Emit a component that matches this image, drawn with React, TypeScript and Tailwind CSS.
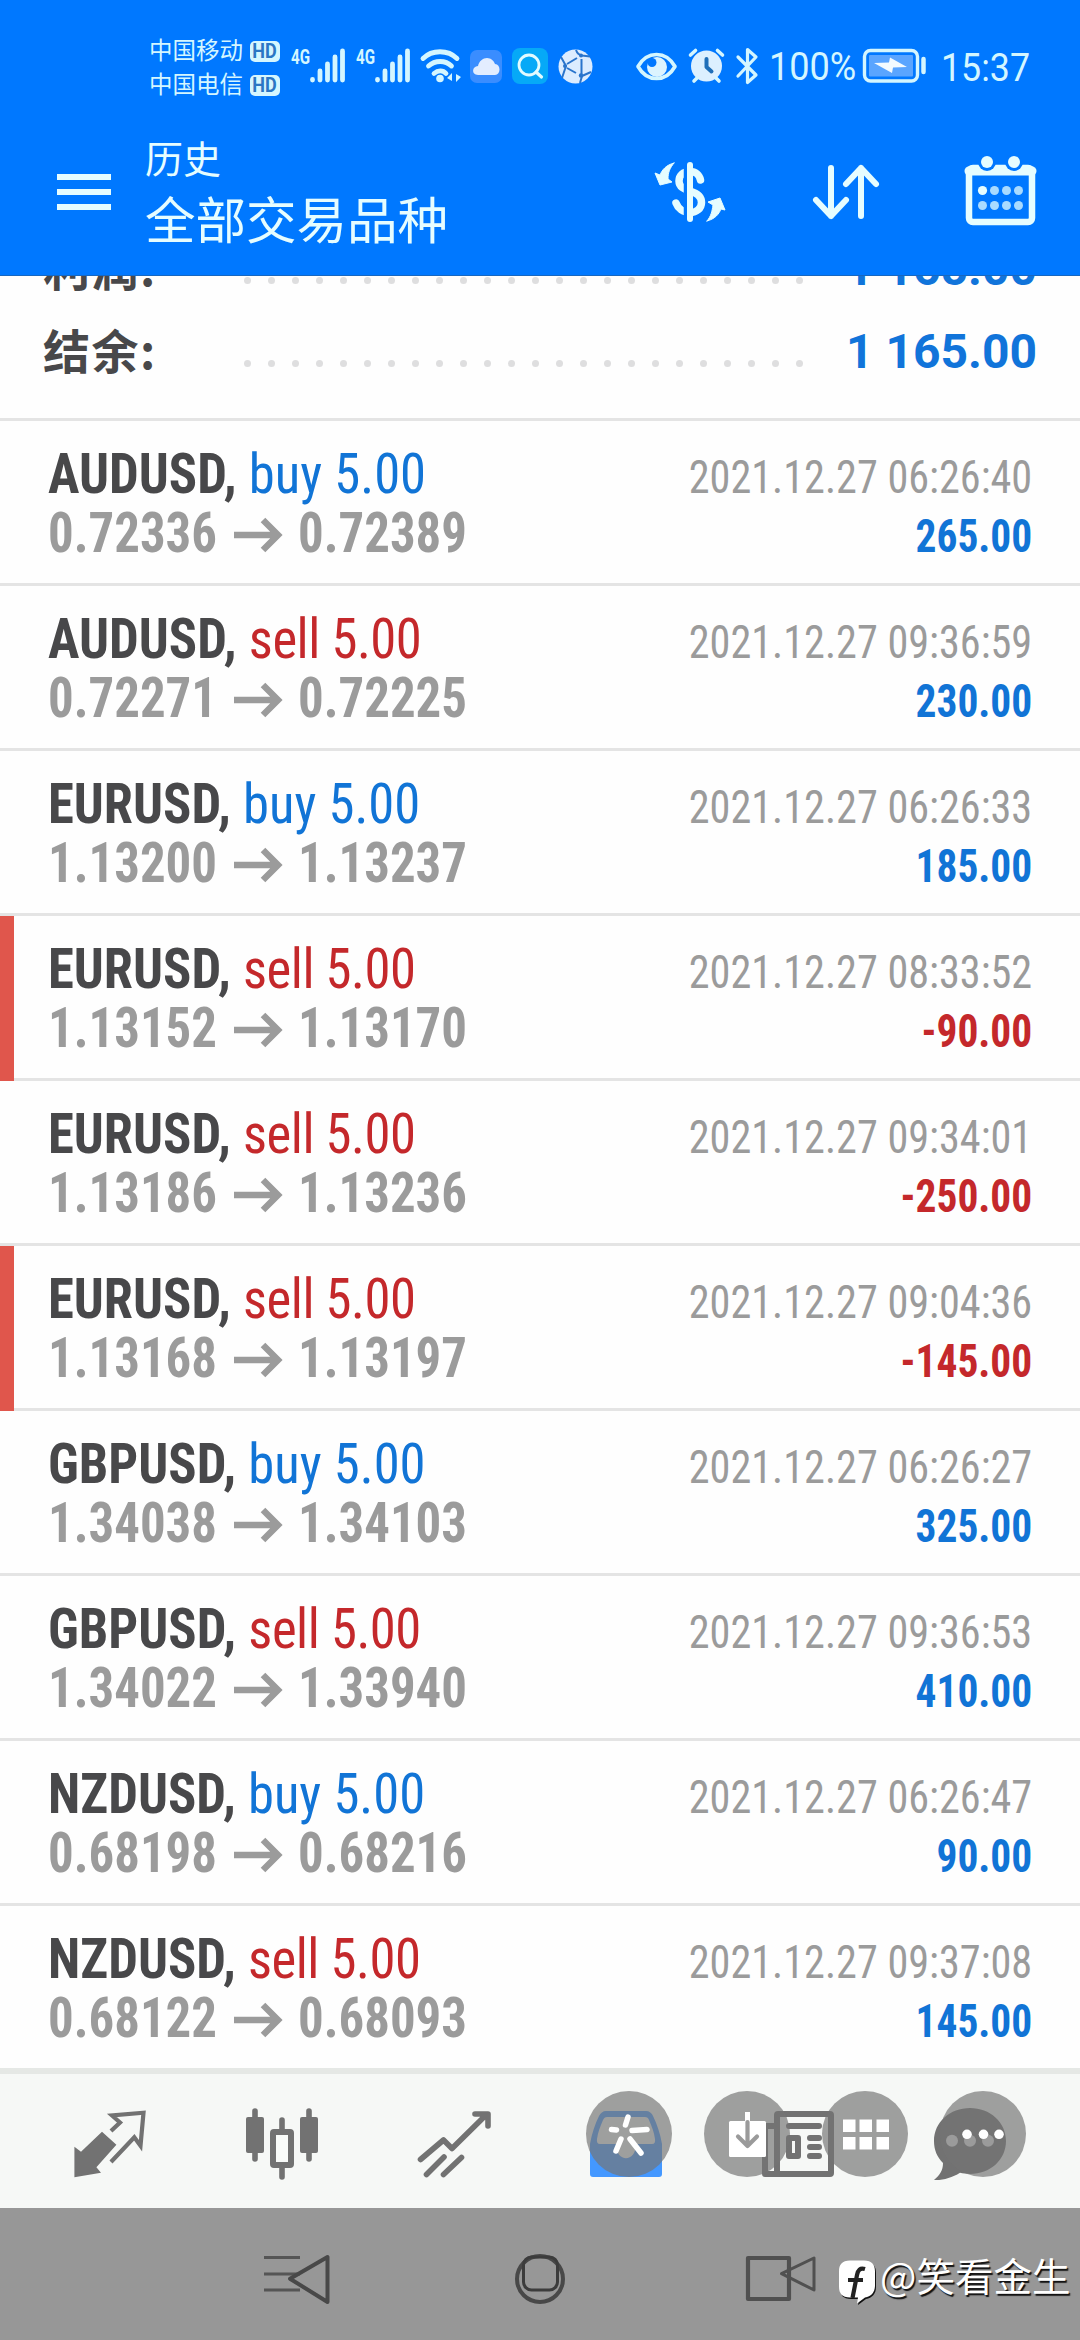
import type { ReactNode } from "react";
import clsx from "clsx";

type Deal = {
  symbol: string;
  side: "buy" | "sell";
  volume: string;
  open: string;
  close: string;
  time: string;
  profit: string;
  stopped?: boolean;
};

const deals: Deal[] = [
  { symbol: "AUDUSD", side: "buy", volume: "5.00", open: "0.72336", close: "0.72389", time: "2021.12.27 06:26:40", profit: "265.00" },
  { symbol: "AUDUSD", side: "sell", volume: "5.00", open: "0.72271", close: "0.72225", time: "2021.12.27 09:36:59", profit: "230.00" },
  { symbol: "EURUSD", side: "buy", volume: "5.00", open: "1.13200", close: "1.13237", time: "2021.12.27 06:26:33", profit: "185.00" },
  { symbol: "EURUSD", side: "sell", volume: "5.00", open: "1.13152", close: "1.13170", time: "2021.12.27 08:33:52", profit: "-90.00", stopped: true },
  { symbol: "EURUSD", side: "sell", volume: "5.00", open: "1.13186", close: "1.13236", time: "2021.12.27 09:34:01", profit: "-250.00" },
  { symbol: "EURUSD", side: "sell", volume: "5.00", open: "1.13168", close: "1.13197", time: "2021.12.27 09:04:36", profit: "-145.00", stopped: true },
  { symbol: "GBPUSD", side: "buy", volume: "5.00", open: "1.34038", close: "1.34103", time: "2021.12.27 06:26:27", profit: "325.00" },
  { symbol: "GBPUSD", side: "sell", volume: "5.00", open: "1.34022", close: "1.33940", time: "2021.12.27 09:36:53", profit: "410.00" },
  { symbol: "NZDUSD", side: "buy", volume: "5.00", open: "0.68198", close: "0.68216", time: "2021.12.27 06:26:47", profit: "90.00" },
  { symbol: "NZDUSD", side: "sell", volume: "5.00", open: "0.68122", close: "0.68093", time: "2021.12.27 09:37:08", profit: "145.00" },
];

function Icon({ box, className, children }: { box: string; className: string; children: ReactNode }) {
  return (
    <svg viewBox={box} className={clsx("block shrink-0 overflow-visible", className)} fill="none" strokeLinecap="round" strokeLinejoin="round">
      {children}
    </svg>
  );
}

function Carrier({ name }: { name: string }) {
  return (
    <div className="flex h-[34px] items-center gap-[7px]">
      <span className="w-[94px] whitespace-nowrap text-[23.5px] leading-[34px]">{name}</span>
      <span className="flex h-[21px] w-[30px] items-center justify-center rounded-[5px] bg-[#d4f6ff] text-[20px] font-bold leading-none text-[#2b76c4]">
        <span className="scale-x-90">HD</span>
      </span>
    </div>
  );
}

function Signal() {
  return (
    <Icon box="291 48 56 36" className="h-9 w-14">
      <text x="291" y="64" fontSize="20" fontWeight="700" textLength="19" lengthAdjust="spacingAndGlyphs" fill="#d4f6ff">4G</text>
      <path d="M312.500 80v-.5M320 80v-9M327.500 80V64M335 80V57M342.500 80V51" stroke="#d4f6ff" strokeWidth="4.800" />
    </Icon>
  );
}

function StatusBar() {
  return (
    <div className="flex h-[134px] text-[#d4f6ff]">
      <div className="ml-[149px] mt-[34px] w-[131px]">
        <Carrier name="中国移动" />
        <Carrier name="中国电信" />
      </div>
      <div className="ml-[11px] mt-12 flex h-9 items-center">
        <Signal />
        <div className="ml-[9px]"><Signal /></div>
        <Icon box="420 48 42 36" className="ml-2 h-9 w-[42px]">
          <g stroke="#d4f6ff" strokeWidth="4.800">
            <path d="M423 58.500c9-9 25-9 34 0" />
            <path d="M428.500 66c6.500-6 17-6 23 0" />
            <path d="M434 73.500c4-3.500 9-3.500 12 0" />
          </g>
          <circle cx="440" cy="78.500" r="3.800" fill="#d4f6ff" />
          <path d="M447 78l5-5v8M461 77l-5 5v-8" fill="#d4f6ff" />
        </Icon>
        <Icon box="470 50 32 33" className="ml-2 h-[33px] w-8">
          <rect x="470" y="50" width="32" height="33" rx="7" fill="#3a8dff" />
          <path d="M478 75c-7 0-6-9 0-9 1-5 5-8 9-8s7 3 8 6c6 0 6 11 0 11z" fill="#e3edff" />
        </Icon>
        <Icon box="512 48 36 36" className="ml-[10px] h-9 w-9">
          <rect x="512" y="48" width="36" height="36" rx="8" fill="#06a9f7" />
          <circle cx="529" cy="65" r="10" stroke="#e2fbff" strokeWidth="2.800" />
          <path d="M536 72l5.500 5" stroke="#e2fbff" strokeWidth="3.200" />
        </Icon>
        <Icon box="558 49 35 35" className="ml-[10px] h-[35px] w-[35px]">
          <circle cx="575.500" cy="66.500" r="17" fill="#dcecff" />
          <path d="M576 50c1 3 3 5 6 5.500l8 1M581.500 59v15M561 57l5 9-4 12M567 64l10-6M567 68l9 5M591 72l-9 4-2 7" stroke="#2a74cc" strokeWidth="2" strokeLinecap="butt" />
          <g fill="#2a74cc">
            <circle cx="581" cy="55.500" r="2" />
            <circle cx="565" cy="66" r="2" />
            <circle cx="581" cy="75.500" r="2.200" />
          </g>
        </Icon>
      </div>
      <div className="ml-[43px] mt-12 flex h-9 items-center">
        <Icon box="636 52 41 28" className="h-7 w-[41px]">
          <path d="M638 66.500c9-16 28-16 37 0-9 16-28 16-37 0z" stroke="#d4f6ff" strokeWidth="3.600" />
          <circle cx="657" cy="67" r="10" fill="#dcf4ff" />
          <circle cx="652" cy="62.500" r="4.500" fill="#0078ff" />
        </Icon>
        <Icon box="689 50 35 34" className="ml-3 h-[34px] w-[35px]">
          <circle cx="706.500" cy="67" r="15.500" fill="#dcf0ff" />
          <path d="M690.500 56l5-4.500M722.500 56l-5-4.500M694 82l3-3M719 82l-3-3" stroke="#d4f6ff" strokeWidth="3.600" />
          <path d="M706.500 60v8l5 4.500" stroke="#1f6fb8" strokeWidth="4" />
        </Icon>
        <Icon box="736 48 22 36" className="ml-3 h-9 w-[22px]">
          <path d="M738 57l18 18-8.500 7.500V49.500L756 57l-18 19" stroke="#d4f6ff" strokeWidth="3.200" />
        </Icon>
        <span className="ml-[11px] w-[86px] whitespace-nowrap pt-1">
          <span className="inline-block origin-left scale-x-[0.95] text-[38px] leading-9">100%</span>
        </span>
        <Icon box="863 50 63 34" className="ml-2 h-[34px] w-[63px]">
          <rect x="864.500" y="51.500" width="53" height="30.500" rx="6" stroke="#d4f6ff" strokeWidth="3.400" />
          <rect x="869" y="56" width="44" height="21.500" rx="1" fill="#5aa5ff" />
          <path d="M874 64l15-.5 1-5 17 9.500-14 .5-1 5.500z" fill="#f4fbff" />
          <path d="M923.500 60v13" stroke="#d4f6ff" strokeWidth="4.500" />
        </Icon>
        <span className="ml-[15px] inline-block origin-left scale-x-[0.94] pt-1 text-[38px] leading-9">15:37</span>
      </div>
    </div>
  );
}

function AppBar() {
  return (
    <div className="flex h-[142px] text-[#e6fdff]">
      <div className="ml-[57px] mt-10 flex w-[54px] flex-col gap-[9px]">
        <span className="h-1.5 bg-[#e6fdff]" />
        <span className="h-1.5 bg-[#e6fdff]" />
        <span className="h-1.5 bg-[#e6fdff]" />
      </div>
      <div className="ml-[34px] w-[508px]">
        <div className="h-[57px] text-[38px] leading-[52px]">历史</div>
        <div className="text-[50.500px] leading-[62px]">全部交易品种</div>
      </div>
      <Icon box="653 161 74 62" className="mt-[27px] h-[62px] w-[74px]">
        <path d="M700.500 180c-1-5-5-8.500-10.500-8.500-7 0-11 4-11 9.500 0 6 5 8 11 10 7 2 11.500 5 11.500 11.500 0 6-5 10-11.500 10-7 0-12-4-14-9.500" stroke="#e6fdff" strokeWidth="7.500" />
        <path d="M685.500 162v60" stroke="#0078ff" strokeWidth="3.500" strokeLinecap="butt" />
        <path d="M690 165v54" stroke="#e6fdff" strokeWidth="6" />
        <path d="M674 163c-8 2-12 7-14 12l-5-2 5 12 12-3-4-3c0-7 2-11 6-16z" fill="#e6fdff" stroke="#e6fdff" />
        <path d="M707 221c8-2 12-7 14-12l4 1-5-12-12 4 5 3c-1 7-2 11-6 16z" fill="#e6fdff" stroke="#e6fdff" />
      </Icon>
      <Icon box="813 165 66 54" className="ml-[86px] mt-[31px] h-[54px] w-[66px]">
        <path d="M831 168v48M816 200l15 16 15-16M861 216v-48M846 184l15-16 15 16" stroke="#e6fdff" strokeWidth="6" />
      </Icon>
      <Icon box="966 155 69 70" className="ml-[87px] mt-[21px] h-[70px] w-[69px]">
        <rect x="969" y="168" width="63" height="54" rx="4" stroke="#e6fdff" strokeWidth="6.500" />
        <path d="M969 171h63" stroke="#e6fdff" strokeWidth="9" />
        <circle cx="987" cy="162" r="9" fill="#0078ff" />
        <circle cx="1014" cy="162" r="9" fill="#0078ff" />
        <circle cx="987" cy="162" r="6" fill="#e6fdff" />
        <circle cx="1014" cy="162" r="6" fill="#e6fdff" />
        <circle cx="982.500" cy="190.500" r="4.600" fill="#e6fdff" />
        <g fill="#a9dbff">
          <circle cx="994.500" cy="190.500" r="4.500" />
          <circle cx="1006.500" cy="190.500" r="4.500" />
          <circle cx="1018.500" cy="190.500" r="4.500" />
          <circle cx="982.500" cy="205.500" r="4.500" />
          <circle cx="994.500" cy="205.500" r="4.500" />
          <circle cx="1006.500" cy="205.500" r="4.500" />
          <circle cx="1018.500" cy="205.500" r="4.500" />
        </g>
      </Icon>
    </div>
  );
}

function SummaryRow({ label, value }: { label: string; value: string }) {
  return (
    <div className="flex h-[83px] shrink-0 items-center pl-[43px] pr-[43px] font-bold">
      <span className="-mt-[7px] w-[201px] font-['Noto_Sans_CJK_SC',sans-serif] text-[47px] leading-[83px] tracking-[1.500px] text-[#48484a]">{label}</span>
      <span className="mt-[23px] flex w-[559px] justify-between">
        {Array.from({ length: 24 }, (_, i) => (
          <span key={i} className="h-[7px] w-[7px] rounded-full bg-[#dededf]" />
        ))}
      </span>
      <span className="ml-auto whitespace-nowrap text-[48px] leading-[83px] text-[#1174da]">{value}</span>
    </div>
  );
}

function DealRow({ deal }: { deal: Deal }) {
  return (
    <div className="flex h-[165px] border-b-[3px] border-[#e4e4e4] bg-[#fefefe] [font-stretch:75%]">
      <div className={clsx("-mb-[3px] w-3.5 shrink-0", deal.stopped && "bg-[#e0564c]")} />
      <div className="flex flex-1 justify-between pl-[34px] pr-[48px]">
        <div className="whitespace-nowrap pt-[24px] text-[55px] font-bold">
          <div className="h-[59px] origin-left scale-x-[0.957] leading-[59px] text-[#48484a]">
            {deal.symbol},{" "}
            <span className={clsx("font-normal", deal.side === "buy" ? "text-[#1174d6]" : "tracking-[-0.5px] text-[#c4282b]")}>
              {deal.side} {deal.volume}
            </span>
          </div>
          <div className="flex h-[59px] items-center leading-[59px] text-[#9b9b9b]">
            <span className="w-[186px] origin-left scale-x-[0.925]">{deal.open}</span>
            <Icon box="234 518 48 34" className="mt-[3px] h-[34px] w-12">
              <path d="M234 535h42M263 520l15 15-15 15" stroke="#9b9b9b" strokeWidth="6.500" strokeLinecap="butt" strokeLinejoin="miter" />
            </Icon>
            <span className="ml-4 origin-left scale-x-[0.925]">{deal.close}</span>
          </div>
        </div>
        <div className="whitespace-nowrap pt-[27px] text-right text-[46px]">
          <div className="h-[59px] origin-right scale-x-[0.918] leading-[59px] text-[#9b9b9b]">{deal.time}</div>
          <div className={clsx("h-[59px] origin-right scale-x-[0.9] font-bold leading-[59px]", deal.profit.startsWith("-") ? "text-[#c4282b]" : "text-[#1174d6]")}>
            {deal.profit}
          </div>
        </div>
      </div>
    </div>
  );
}

function FloatingButton({ children }: { children: ReactNode }) {
  return (
    <div className="h-[86px] w-[86px] rounded-full bg-[#757575]/68">
      <svg viewBox="0 0 86 86" className="h-full w-full" fill="none" strokeLinecap="round" strokeLinejoin="round">
        {children}
      </svg>
    </div>
  );
}

function TabBar() {
  return (
    <div className="relative h-[140px] border-t-[6px] border-[#e5e8e5] bg-[#f6f8f6]">
      <div className="flex gap-[100px] pl-[74px] pt-[34px]">
        <Icon box="74 58 72 72" className="h-[72px] w-[72px]">
          <path d="M74.400 96.700l6.600 5 21-20 14.400 13-20 22.600 4.600 5.400-26.600 4.600z" fill="#727272" />
          <path d="M111 81l9-8.500-8-7 31.500-2.800-3 33-6.200-8.500L111 112" stroke="#727272" strokeWidth="4.200" strokeLinejoin="miter" strokeLinecap="butt" />
        </Icon>
        <Icon box="246 58 72 72" className="h-[72px] w-[72px]">
          <path d="M255 61v48M309 61v48M282 70v12M282 116v11" stroke="#727272" strokeWidth="5.600" />
          <rect x="246" y="67" width="18" height="36" rx="2" fill="#727272" />
          <rect x="300" y="67" width="18" height="36" rx="2" fill="#727272" />
          <rect x="273" y="82" width="18" height="33" rx="1" fill="#f9fbf9" stroke="#727272" strokeWidth="6" />
        </Icon>
        <Icon box="418 58 72 72" className="h-[72px] w-[72px]">
          <path d="M420.500 109.500L443.500 90l8.500 8.500L486 65M475 64h13v12M426.500 124.500L444 107M443.500 124.500L461.500 107.500" stroke="#727272" strokeWidth="5.600" />
        </Icon>
        <Icon box="590 58 72 72" className="h-[72px] w-[72px]">
          <path fillRule="evenodd" d="M590 94c2-11 5-20 9-28 1.500-3 4-5 7-5h40c3 0 6 2 7 5 4 8 7 17 9 28v30c0 2-1 3-3 3h-66c-2 0-3-1-3-3zM607 67c-2 0-3 1-4 3-3 7-5 12-6 19-.5 3 .5 5 3 5h16c0 19 20 19 20 0h16c2.500 0 3.500-2 3-5-1-7-3-12-6-19-.5-2-2-3-4-3z" fill="#4498ff" />
        </Icon>
        <Icon box="762 58 72 72" className="h-[72px] w-[72px]">
          <rect x="777" y="64" width="54" height="60" rx="1" fill="#f6f8f6" stroke="#727272" strokeWidth="6" />
          <path d="M775 76h-10v48h12M789 76h30M810 88h9M810 97h9M810 106h9" stroke="#727272" strokeWidth="6" />
          <rect x="789" y="88" width="9" height="18" stroke="#727272" strokeWidth="6" />
        </Icon>
        <Icon box="934 58 72 72" className="h-[72px] w-[72px]">
          <path d="M970 58c20 0 36 14 36 33s-16 33-36 33c-4 0-7-.500-10-1.200-8 5-17 7.700-26 7.200 6-5 9-10 9-17-6-6-9-13-9-22 0-19 16-33 36-33z" fill="#727272" />
        </Icon>
      </div>
      <div className="absolute left-[586px] top-[17px] flex gap-8">
        <FloatingButton>
          <g stroke="#fff" strokeWidth="5.500">
            <path d="M42 26l-2.500 8M25.500 38.500l5 .5M46 39.500l15-1M35 48l-5 12M44 48l11 14" />
          </g>
        </FloatingButton>
        <FloatingButton>
          <path d="M43.500 21v10" stroke="#fff" strokeWidth="5" strokeLinecap="butt" />
          <rect x="25" y="30" width="37" height="36" rx="1.500" fill="#fff" />
          <path d="M43.500 31v23M34 45.500l9.500 9.500 9.500-9.500" stroke="#9a9a9a" strokeWidth="4.200" />
        </FloatingButton>
        <FloatingButton>
          <path d="M21 28.500h12.500V41H21zM37.500 28.500H50V41H37.500zM54.500 28.500H67V41H54.500zM21 46h12.500v12.500H21zM37.500 46H50v12.500H37.500zM54.500 46H67v12.500H54.500z" fill="#fff" />
        </FloatingButton>
        <FloatingButton>
          <g fill="#9b9b9b">
            <circle cx="12" cy="49.700" r="6" />
            <circle cx="30" cy="49.700" r="6" />
            <circle cx="48" cy="49.700" r="6" />
          </g>
          <g fill="#fff">
            <circle cx="27" cy="43.300" r="4.800" />
            <circle cx="43.500" cy="43.300" r="4.800" />
            <circle cx="59" cy="43.300" r="4.800" />
          </g>
        </FloatingButton>
      </div>
    </div>
  );
}

function SystemNav() {
  return (
    <div className="flex h-[132px] bg-[#979797] pt-11">
      <Icon box="262 202 70 54" className="ml-[262px] h-[54px] w-[70px]">
        <path d="M264 207.500h36M264 224h36M264 240h36" stroke="#555" strokeWidth="3" strokeLinecap="butt" />
        <path d="M290 228.700L327.500 207v45z" stroke="#484848" strokeWidth="4" />
      </Icon>
      <Icon box="513 202 54 54" className="ml-[181px] h-[54px] w-[54px]">
        <circle cx="540" cy="229" r="23" stroke="#484848" strokeWidth="4" />
        <rect x="523.500" y="207" width="34" height="33" rx="8" stroke="#3c3c3c" strokeWidth="3" />
      </Icon>
      <Icon box="745 202 72 54" className="ml-[178px] h-[54px] w-[72px]">
        <rect x="748" y="208" width="41" height="41" stroke="#505050" strokeWidth="4.200" />
        <path d="M781.500 223.700L814 208v32z" stroke="#505050" strokeWidth="3" />
      </Icon>
      <Icon box="838 209 38 45" className="ml-[21px] mt-[7px] h-[45px] w-[38px]">
        <path d="M851 212h14c8 0 11 4 11 11v14c0 7-4 11-10 12l-8 6 1-6h-8c-8 0-11-4-11-11v-15c0-7 3-11 11-11z" fill="#111" />
        <path d="M850 210.500h14c8 0 11 4 11 11v14c0 7-4 11-10 12l-8 6 1-6h-8c-8 0-11-4-11-11v-15c0-7 3-11 11-11z" fill="#fff" />
        <path d="M865 219c-5-1.500-7 1-8 6l-4.500 23M848 230h15" stroke="#222" strokeWidth="4.200" strokeLinecap="butt" />
      </Icon>
      <span className="-mt-1 ml-1 h-[54px] whitespace-nowrap font-['Noto_Sans_CJK_SC',sans-serif] text-[38.500px] leading-[52px] text-white [text-shadow:1.500px_1.500px_1px_#111]">@笑看金生</span>
    </div>
  );
}

export default function App() {
  return (
    <div className="flex h-[2340px] w-[1080px] flex-col overflow-hidden bg-[#fefefe] font-['Roboto','Noto_Sans_CJK_SC',sans-serif]">
      <header className="h-[276px] shrink-0 border-b border-[#1767c0] bg-[#0078ff]">
        <StatusBar />
        <AppBar />
      </header>
      {/* the totals are scrolled half under the header */}
      <section className="flex h-[145px] shrink-0 flex-col justify-end overflow-hidden border-b-[3px] border-[#e4e4e4] pb-[25px]">
        <SummaryRow label="利润:" value="1 165.00" />
        <SummaryRow label="结余:" value="1 165.00" />
      </section>
      <main className="shrink-0">
        {deals.map((deal) => (
          <DealRow key={deal.time} deal={deal} />
        ))}
      </main>
      <div className="-mt-[3px] shrink-0">
        <TabBar />
        <SystemNav />
      </div>
    </div>
  );
}
